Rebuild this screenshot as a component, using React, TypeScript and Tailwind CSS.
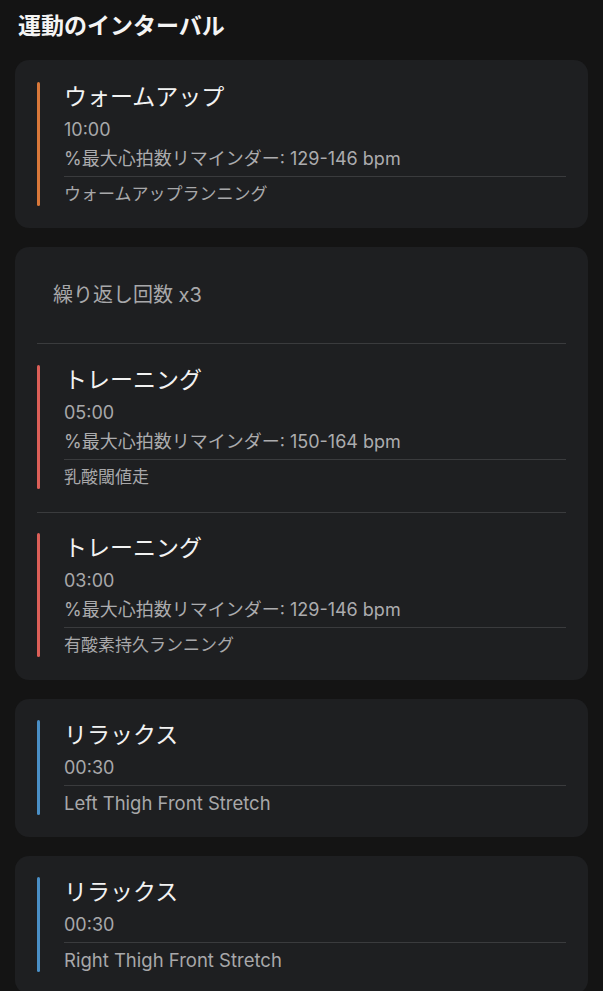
import React from "react";

type Step = {
  title: string;
  time: string;
  hr?: string;
  desc: string;
  latinDesc?: boolean;
  color: string;
};

function StepItem({ s }: { s: Step }) {
  return (
    <div className="flex">
      <div className={`w-[3px] shrink-0 rounded-full ${s.color}`} />
      <div className="ml-[24px] flex flex-1 flex-col">
        <div className="text-[23px] leading-[30px] text-[#f2f2f2]">{s.title}</div>
        <div className="mt-[6px] text-[18px] leading-[24px] text-[#a8a8aa]">{s.time}</div>
        {s.hr && (
          <div className="mt-[5px] text-[18px] leading-[24px] text-[#acacae]">{s.hr}</div>
        )}
        <div className="mt-[5px] h-px bg-[#3a3b3d]" />
        <div
          className={`mt-[5px] leading-[24px] text-[#a8a8aa] ${
            s.latinDesc ? "text-[18.5px]" : "text-[17px]"
          }`}
        >
          {s.desc}
        </div>
      </div>
    </div>
  );
}

const ORANGE = "bg-[#d9783a]";
const RED = "bg-[#dc5f58]";
const BLUE = "bg-[#4a8fc6]";

export default function App() {
  return (
    <div
      className="min-h-[991px] bg-[#141414] px-[15px] pb-[30px]"
      style={{ fontFamily: '"Inter", "Noto Sans CJK JP", sans-serif' }}
    >
      <h1 className="pl-[3px] pt-[11px] text-[23px] font-bold leading-[30px] text-[#f4f4f4]">
        運動のインターバル
      </h1>

      <div className="mt-[19px] flex flex-col gap-[19px]">
        <div className="rounded-[14px] bg-[#1e1f21] p-[22px]">
          <StepItem
            s={{
              title: "ウォームアップ",
              time: "10:00",
              hr: "%最大心拍数リマインダー: 129-146 bpm",
              desc: "ウォームアップランニング",
              color: ORANGE,
            }}
          />
        </div>

        <div className="rounded-[14px] bg-[#1e1f21] px-[22px]">
          <div className="flex h-[96px] items-center pl-[16px] text-[20px] text-[#a8a8aa]">
            繰り返し回数 x3
          </div>
          <div className="h-px bg-[#3a3b3d]" />
          <div className="pt-[21px] pb-[23px]">
            <StepItem
              s={{
                title: "トレーニング",
                time: "05:00",
                hr: "%最大心拍数リマインダー: 150-164 bpm",
                desc: "乳酸閾値走",
                color: RED,
              }}
            />
          </div>
          <div className="h-px bg-[#3a3b3d]" />
          <div className="pt-[20px] pb-[23px]">
            <StepItem
              s={{
                title: "トレーニング",
                time: "03:00",
                hr: "%最大心拍数リマインダー: 129-146 bpm",
                desc: "有酸素持久ランニング",
                color: RED,
              }}
            />
          </div>
        </div>

        <div className="rounded-[14px] bg-[#1e1f21] px-[22px] pt-[21px] pb-[22px]">
          <StepItem
            s={{
              title: "リラックス",
              time: "00:30",
              desc: "Left Thigh Front Stretch",
              latinDesc: true,
              color: BLUE,
            }}
          />
        </div>

        <div className="rounded-[14px] bg-[#1e1f21] px-[22px] pt-[21px] pb-[22px]">
          <StepItem
            s={{
              title: "リラックス",
              time: "00:30",
              desc: "Right Thigh Front Stretch",
              latinDesc: true,
              color: BLUE,
            }}
          />
        </div>
      </div>
    </div>
  );
}
